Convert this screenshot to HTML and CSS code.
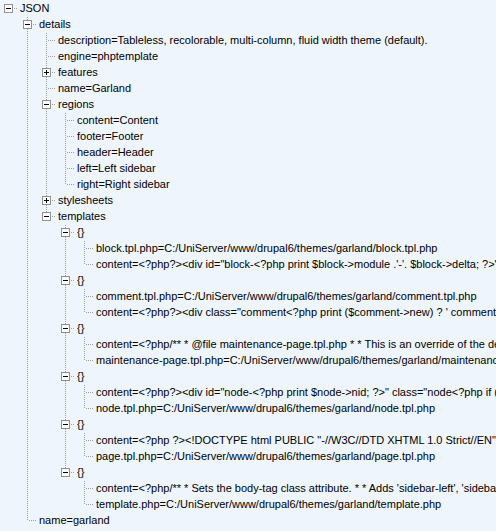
FILE: index.html
```html
<!DOCTYPE html>
<html lang="en">
<head>
    <meta charset="UTF-8">
    <title>JSON tree</title>
    <link rel="stylesheet" href="styles.css">
</head>
<body>
    <ul class="tree root">
        <li class="branch">
            <span class="row"><i class="toggle minus"></i>JSON</span>
            <ul>
                <li class="branch">
                    <span class="row"><i class="toggle minus"></i>details</span>
                    <ul>
                        <li><span class="row">description=Tableless, recolorable, multi-column, fluid width theme (default).</span></li>
                        <li><span class="row">engine=phptemplate</span></li>
                        <li class="branch"><span class="row"><i class="toggle plus"></i>features</span></li>
                        <li><span class="row">name=Garland</span></li>
                        <li class="branch">
                            <span class="row"><i class="toggle minus"></i>regions</span>
                            <ul>
                                <li><span class="row">content=Content</span></li>
                                <li><span class="row">footer=Footer</span></li>
                                <li><span class="row">header=Header</span></li>
                                <li><span class="row">left=Left sidebar</span></li>
                                <li><span class="row">right=Right sidebar</span></li>
                            </ul>
                        </li>
                        <li class="branch"><span class="row"><i class="toggle plus"></i>stylesheets</span></li>
                        <li class="branch">
                            <span class="row"><i class="toggle minus"></i>templates</span>
                            <ul>
                                <li class="branch">
                                    <span class="row"><i class="toggle minus"></i>{}</span>
                                    <ul>
                                        <li><span class="row">block.tpl.php=C:/UniServer/www/drupal6/themes/garland/block.tpl.php</span></li>
                                        <li><span class="row">content=&lt;?php?&gt;&lt;div id="block-&lt;?php print $block-&gt;module .'-'. $block-&gt;delta; ?&gt;" class="clear-block block block-&lt;?php print $block-&gt;module ?&gt;"&gt;</span></li>
                                    </ul>
                                </li>
                                <li class="branch">
                                    <span class="row"><i class="toggle minus"></i>{}</span>
                                    <ul>
                                        <li><span class="row">comment.tpl.php=C:/UniServer/www/drupal6/themes/garland/comment.tpl.php</span></li>
                                        <li><span class="row">content=&lt;?php?&gt;&lt;div class="comment&lt;?php print ($comment-&gt;new) ? ' comment-new' : ''; ?&gt;"&gt;</span></li>
                                    </ul>
                                </li>
                                <li class="branch">
                                    <span class="row"><i class="toggle minus"></i>{}</span>
                                    <ul>
                                        <li><span class="row">content=&lt;?php/** * @file maintenance-page.tpl.php * * This is an override of the default maintenance page.</span></li>
                                        <li><span class="row">maintenance-page.tpl.php=C:/UniServer/www/drupal6/themes/garland/maintenance-page.tpl.php</span></li>
                                    </ul>
                                </li>
                                <li class="branch">
                                    <span class="row"><i class="toggle minus"></i>{}</span>
                                    <ul>
                                        <li><span class="row">content=&lt;?php?&gt;&lt;div id="node-&lt;?php print $node-&gt;nid; ?&gt;" class="node&lt;?php if ($sticky) { print ' sticky'; } ?&gt;"&gt;</span></li>
                                        <li><span class="row">node.tpl.php=C:/UniServer/www/drupal6/themes/garland/node.tpl.php</span></li>
                                    </ul>
                                </li>
                                <li class="branch">
                                    <span class="row"><i class="toggle minus"></i>{}</span>
                                    <ul>
                                        <li><span class="row">content=&lt;?php ?&gt;&lt;!DOCTYPE html PUBLIC "-//W3C//DTD XHTML 1.0 Strict//EN"  "http://www.w3.org/TR/xhtml1/DTD/xhtml1-strict.dtd"&gt;</span></li>
                                        <li><span class="row">page.tpl.php=C:/UniServer/www/drupal6/themes/garland/page.tpl.php</span></li>
                                    </ul>
                                </li>
                                <li class="branch">
                                    <span class="row"><i class="toggle minus"></i>{}</span>
                                    <ul>
                                        <li><span class="row">content=&lt;?php/** * Sets the body-tag class attribute. * * Adds 'sidebar-left', 'sidebar-right' or 'sidebars' classes as needed. */</span></li>
                                        <li><span class="row">template.php=C:/UniServer/www/drupal6/themes/garland/template.php</span></li>
                                    </ul>
                                </li>
                            </ul>
                        </li>
                    </ul>
                </li>
                <li><span class="row">name=garland</span></li>
            </ul>
        </li>
    </ul>
</body>
</html>
```

FILE: styles.css
```css
html {
    overflow: hidden;
}
body {
    margin: 0;
    background-color: #eef5fd;
    font-family: "Liberation Sans", Arial, sans-serif;
    font-size: 11px;
    color: #000;
}
.tree, .tree ul {
    list-style: none;
    margin: 0;
    padding: 0;
}
.tree ul {
    padding-left: 19px;
}
.tree li {
    position: relative;
}
.row {
    display: block;
    position: relative;
    height: 16px;
    line-height: 16px;
    padding-left: 20px;
    white-space: pre;
}

/* dotted sibling line */
.tree ul > li::before {
    content: "";
    position: absolute;
    left: 8px;
    top: 0;
    bottom: 0;
    width: 1px;
    background: linear-gradient(#a0a0a0 50%, transparent 50%) 0 1px / 1px 2px repeat-y;
}
.tree ul > li:last-child::before {
    bottom: auto;
    height: 9px;
}
/* dotted connector to the label */
.tree ul > li > .row::before {
    content: "";
    position: absolute;
    left: 9px;
    top: 8px;
    width: 9px;
    height: 1px;
    background: linear-gradient(to right, #a0a0a0 50%, transparent 50%) 1px 0 / 2px 1px repeat-x;
}
.root > li > .row::before {
    content: "";
    position: absolute;
    left: 13px;
    top: 8px;
    width: 5px;
    height: 1px;
    background: linear-gradient(to right, #a0a0a0 50%, transparent 50%) 1px 0 / 2px 1px repeat-x;
}

.toggle {
    position: absolute;
    left: 4px;
    top: 4px;
    width: 7px;
    height: 7px;
    border: 1px solid #919191;
    background: #fff;
    z-index: 1;
}
.toggle::before {
    content: "";
    position: absolute;
    left: 1px;
    top: 3px;
    width: 5px;
    height: 1px;
    background: #000;
}
.plus::after {
    content: "";
    position: absolute;
    left: 3px;
    top: 1px;
    width: 1px;
    height: 5px;
    background: #000;
}
```
